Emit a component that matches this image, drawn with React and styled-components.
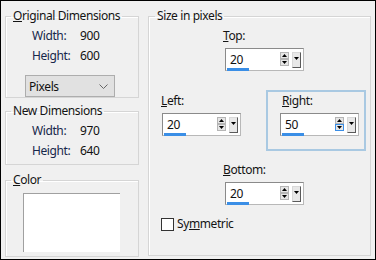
import React from "react";
import styled, { createGlobalStyle } from "styled-components";

const GlobalStyle = createGlobalStyle`
  html, body {
    margin: 0;
    padding: 0;
    background: #f0f0f0;
  }
  body {
    font-family: "Noto Sans", "Open Sans", sans-serif;
    font-size: 12px;
    letter-spacing: -0.4px;
    color: #141414;
  }
`;

const Dialog = styled.div`
  box-sizing: border-box;
  width: 376px;
  height: 260px;
  border: 1px solid #000;
  background: #f0f0f0;
  display: flex;
  padding: 7px 4px 0 4px;
  gap: 9px;
`;

const LeftColumn = styled.div`
  width: 134px;
  display: flex;
  flex-direction: column;
`;

const Group = styled.fieldset`
  box-sizing: border-box;
  margin: ${p => p.$top || 0}px 0 0 0;
  padding: 0;
  width: ${p => p.$w}px;
  height: ${p => p.$h}px;
  border: 1px solid #d5d5d5;
  box-shadow: inset 1px 1px 0 #fff;
  display: flex;
  flex-direction: column;
  align-items: flex-start;
  min-width: 0;
`;

const Legend = styled.legend`
  margin-left: ${p => p.$ml || 5}px;
  padding: 0 2px;
  line-height: 16px;
  font-size: 12px;
  color: #141414;
`;

const Mn = styled.span`
  text-decoration: underline;
  text-underline-offset: 1px;
`;

const InfoGrid = styled.div`
  display: grid;
  grid-template-columns: 48px auto;
  grid-auto-rows: 20px;
  align-items: center;
  padding: 2px 0 0 26px;
  line-height: 16px;
`;

const InfoLabel = styled.span`
  color: #16264a;
`;

const InfoValue = styled.span`
  color: #111;
`;

const Select = styled.div`
  box-sizing: border-box;
  margin: 9px 0 0 19px;
  width: 90px;
  height: 22px;
  background: #e1e1e1;
  border: 1px solid #adadad;
  display: flex;
  align-items: center;
  justify-content: space-between;
  padding: 0 6px 0 3px;
  color: #111;
`;

const Swatch = styled.div`
  box-sizing: border-box;
  margin: 5px 0 0 17px;
  width: 97px;
  height: 59px;
  background: #fff;
  border-top: 1px solid #a0a0a0;
  border-left: 1px solid #a0a0a0;
`;

const FieldBox = styled.div`
  display: flex;
  flex-direction: column;
  margin: ${p => p.$mt || 0}px 0 0 ${p => p.$ml || 0}px;
`;

const FieldLabel = styled.span`
  line-height: 16px;
  margin-left: ${p => p.$shift || 0}px;
  margin-bottom: 4px;
  color: #141414;
`;

const SpinBox = styled.div`
  box-sizing: border-box;
  width: 79px;
  height: 23px;
  margin-left: ${p => p.$shift || 0}px;
  background: #fff;
  border: 1px solid #8a8a8a;
  border-right-color: #b8b8b8;
  border-bottom-color: #b8b8b8;
  display: flex;
  align-items: flex-start;
`;

const ValueCell = styled.div`
  flex: 1;
  display: flex;
  flex-direction: column;
  padding: 3px 0 0 1px;
`;

const ValueText = styled.span`
  line-height: 16px;
  padding-left: 3px;
  color: #111;
`;

const ValueBar = styled.div`
  width: 22px;
  height: 3px;
  background: #3a8ee6;
`;

const SpinStack = styled.div`
  margin-top: 3px;
  display: flex;
  flex-direction: column;
`;

const SpinButton = styled.div`
  box-sizing: border-box;
  width: 9px;
  height: 7px;
  background: #e6e6e6;
  border: 1px solid ${p => (p.$hot ? "#3a8ee6" : "#b5b5b5")};
  display: flex;
  align-items: center;
  justify-content: center;
`;

const DropButton = styled.div`
  box-sizing: border-box;
  width: 9px;
  height: 16px;
  margin: 3px 2px 0 3px;
  background: #e8e8e8;
  border: 1px solid #d8d8d8;
  border-right-color: #5a5a5a;
  border-bottom-color: #5a5a5a;
  display: flex;
  justify-content: center;
  padding-top: 4px;
`;

const MiddleRow = styled.div`
  display: flex;
  align-items: flex-start;
  margin-top: 19px;
`;

const HotFrame = styled.div`
  margin-left: 25px;
  border: 2px solid #a9c9e2;
  padding: 1px 5px 13px 12px;
`;

const CheckRow = styled.label`
  display: flex;
  align-items: center;
  gap: 3px;
  margin: 11px 0 0 12px;
  line-height: 16px;
`;

const CheckBox = styled.span`
  box-sizing: border-box;
  width: 13px;
  height: 13px;
  background: #fff;
  border: 1px solid #333;
`;

const Up = () => (
  <svg width="5" height="3" viewBox="0 0 5 3">
    <path d="M2.5 0 L5 3 L0 3 Z" fill="#000" />
  </svg>
);

const Down = () => (
  <svg width="5" height="3" viewBox="0 0 5 3">
    <path d="M0 0 L5 0 L2.5 3 Z" fill="#000" />
  </svg>
);

const Chevron = () => (
  <svg width="9" height="5" viewBox="0 0 9 5">
    <path d="M0.5 0.5 L4.5 4.5 L8.5 0.5" fill="none" stroke="#666" strokeWidth="1" />
  </svg>
);

const Spinner = ({ value, shift, hotDown }) => (
  <SpinBox $shift={shift}>
    <ValueCell>
      <ValueText>{value}</ValueText>
      <ValueBar />
    </ValueCell>
    <SpinStack>
      <SpinButton>
        <Up />
      </SpinButton>
      <SpinButton $hot={hotDown}>
        <Down />
      </SpinButton>
    </SpinStack>
    <DropButton>
      <Down />
    </DropButton>
  </SpinBox>
);

const Field = ({ label, mn, value, mt, ml, labelShift, inputShift, hotDown }) => (
  <FieldBox $mt={mt} $ml={ml}>
    <FieldLabel $shift={labelShift}>
      <Mn>{mn}</Mn>
      {label}
    </FieldLabel>
    <Spinner value={value} shift={inputShift} hotDown={hotDown} />
  </FieldBox>
);

export default function App() {
  return (
    <>
      <GlobalStyle />
      <Dialog>
        <LeftColumn>
          <Group $w={134} $h={90}>
            <Legend>
              <Mn>O</Mn>riginal Dimensions
            </Legend>
            <InfoGrid>
              <InfoLabel>Width:</InfoLabel>
              <InfoValue>900</InfoValue>
              <InfoLabel>Height:</InfoLabel>
              <InfoValue>600</InfoValue>
            </InfoGrid>
            <Select>
              <span>Pixels</span>
              <Chevron />
            </Select>
          </Group>
          <Group $w={134} $h={62} $top={5}>
            <Legend>New Dimensions</Legend>
            <InfoGrid>
              <InfoLabel>Width:</InfoLabel>
              <InfoValue>970</InfoValue>
              <InfoLabel>Height:</InfoLabel>
              <InfoValue>640</InfoValue>
            </InfoGrid>
          </Group>
          <Group $w={134} $h={85} $top={7}>
            <Legend>
              <Mn>C</Mn>olor
            </Legend>
            <Swatch />
          </Group>
        </LeftColumn>

        <Group $w={223} $h={248}>
          <Legend $ml={6}>Size in pixels</Legend>
          <Field label="op:" mn="T" value="20" mt={4} ml={74} inputShift={2} />
          <MiddleRow>
            <Field label="eft:" mn="L" value="20" mt={3} ml={12} inputShift={1} />
            <HotFrame>
              <Field label="ight:" mn="R" value="50" labelShift={2} hotDown />
            </HotFrame>
          </MiddleRow>
          <Field label="ottom:" mn="B" value="20" mt={11} ml={74} inputShift={2} />
          <CheckRow>
            <CheckBox />
            <span>
              Sy<Mn>m</Mn>metric
            </span>
          </CheckRow>
        </Group>
      </Dialog>
    </>
  );
}
